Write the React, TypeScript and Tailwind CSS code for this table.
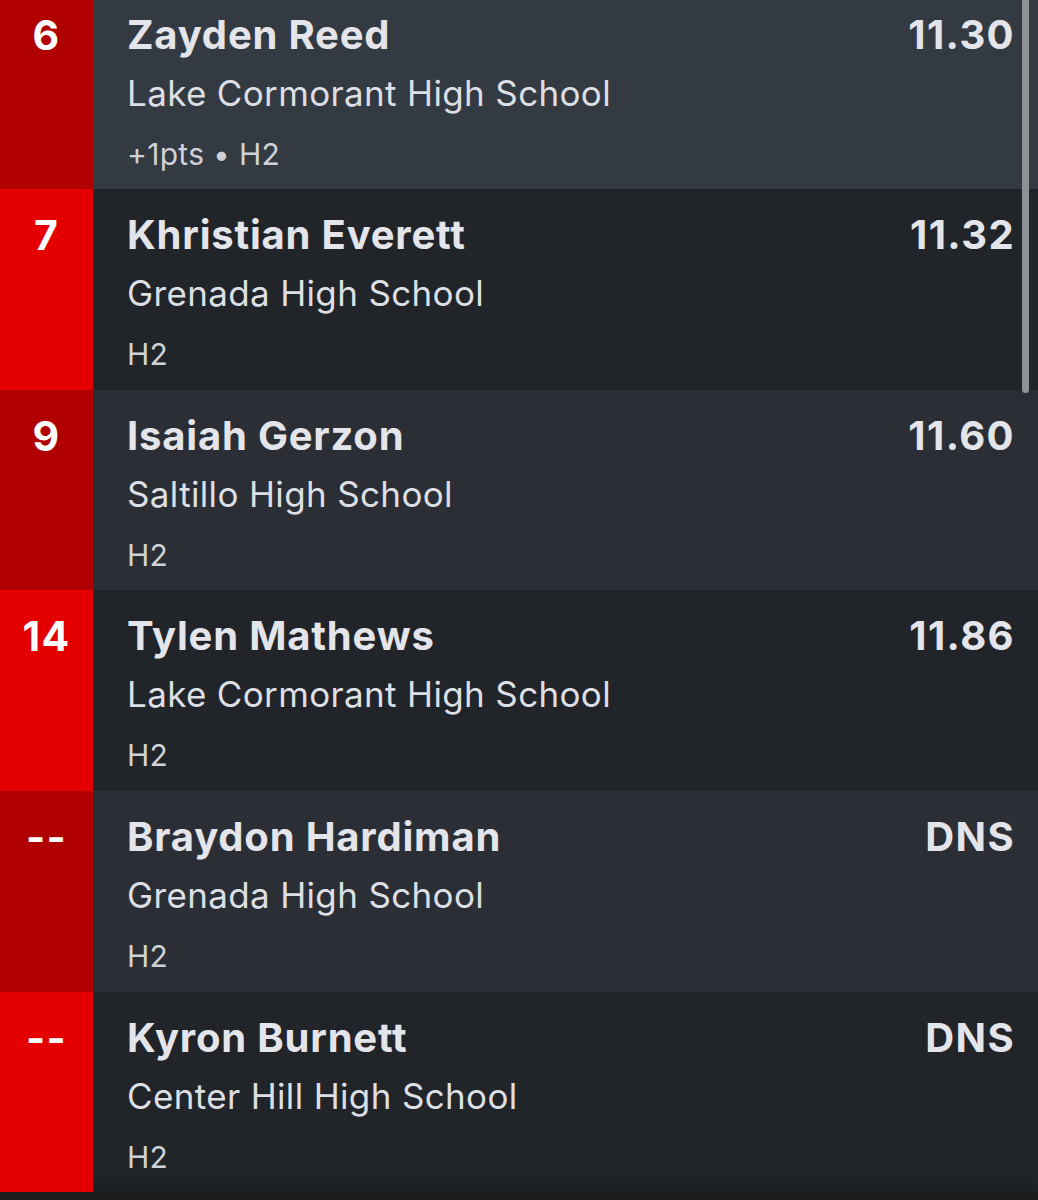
import React from "react";

type Entry = {
  rank: string;
  name: string;
  school: string;
  mark: string;
  sub: string;
  rowBg: string;
  rankBg: string;
  h: string;
};

const entries: Entry[] = [
  { rank: "6", name: "Zayden Reed", school: "Lake Cormorant High School", mark: "11.30", sub: "+1pts • H2", rowBg: "bg-[#343a42]", rankBg: "bg-[#b10000]", h: "h-[200px]" },
  { rank: "7", name: "Khristian Everett", school: "Grenada High School", mark: "11.32", sub: "H2", rowBg: "bg-[#212429]", rankBg: "bg-[#e40000]", h: "h-[201px]" },
  { rank: "9", name: "Isaiah Gerzon", school: "Saltillo High School", mark: "11.60", sub: "H2", rowBg: "bg-[#2b2f35]", rankBg: "bg-[#b10000]", h: "h-[200px]" },
  { rank: "14", name: "Tylen Mathews", school: "Lake Cormorant High School", mark: "11.86", sub: "H2", rowBg: "bg-[#212429]", rankBg: "bg-[#e40000]", h: "h-[201px]" },
  { rank: "--", name: "Braydon Hardiman", school: "Grenada High School", mark: "DNS", sub: "H2", rowBg: "bg-[#2b2f35]", rankBg: "bg-[#b10000]", h: "h-[201px]" },
  { rank: "--", name: "Kyron Burnett", school: "Center Hill High School", mark: "DNS", sub: "H2", rowBg: "bg-[#212429]", rankBg: "bg-[#e40000]", h: "h-[200px]" },
];

function ResultRow({ e }: { e: Entry }) {
  return (
    <div className={`flex ${e.h} ${e.rowBg}`}>
      {/* place column */}
      <div className={`w-[93px] shrink-0 ${e.rankBg} flex justify-center pt-[22px]`}>
        <span className="text-[41px] leading-[48px] font-bold text-white tracking-[0.03em]">{e.rank}</span>
      </div>

      {/* athlete */}
      <div className="flex-1 pl-[34px] pr-[23px] pt-[22px]">
        <div className="flex items-start justify-between">
          <span className="text-[40px] leading-[48px] font-bold text-[#e3e5ea] tracking-[0.02em]">{e.name}</span>
          <span className="text-[40px] leading-[48px] font-bold text-[#e3e5ea] tracking-[0.035em]">{e.mark}</span>
        </div>
        <div className="mt-[14px] text-[35px] leading-[40px] text-[#dcdfe4] tracking-[0.01em]">{e.school}</div>
        <div className="mt-[23px] text-[30px] leading-[36px] text-[#cfd2d7] tracking-[0.01em]">{e.sub}</div>
      </div>
    </div>
  );
}

export default function App() {
  return (
    <main
      className="relative w-[1038px] h-[1200px] overflow-hidden bg-[#1c1d1f]"
      style={{ fontFamily: "Inter, 'Noto Sans', sans-serif" }}
    >
      <div className="-mt-[11px]">
        {entries.map((e, i) => (
          <ResultRow key={i} e={e} />
        ))}
      </div>

      {/* bottom bar shadow */}
      <div className="h-2 shadow-[0_-6px_14px_rgba(0,0,0,0.35)]" />

      {/* scrollbar */}
      <div className="absolute right-[9px] top-0 w-[7px] h-[393px] rounded-b-full bg-[#8e9196]" />
    </main>
  );
}
